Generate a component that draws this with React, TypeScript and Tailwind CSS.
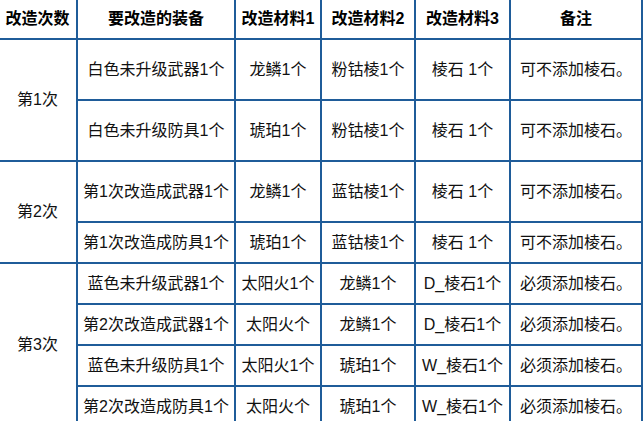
import React from "react";

type Row = {
  times?: string;
  span?: number;
  tall?: boolean;
  item: string;
  m1: string;
  m2: string;
  m3: string;
  note: string;
};

const rows: Row[] = [
  { times: "第1次", span: 2, tall: true, item: "白色未升级武器1个", m1: "龙鳞1个", m2: "粉钴棱1个", m3: "棱石 1个", note: "可不添加棱石。" },
  { tall: true, item: "白色未升级防具1个", m1: "琥珀1个", m2: "粉钴棱1个", m3: "棱石 1个", note: "可不添加棱石。" },
  { times: "第2次", span: 2, tall: true, item: "第1次改造成武器1个", m1: "龙鳞1个", m2: "蓝钴棱1个", m3: "棱石 1个", note: "可不添加棱石。" },
  { item: "第1次改造成防具1个", m1: "琥珀1个", m2: "蓝钴棱1个", m3: "棱石 1个", note: "可不添加棱石。" },
  { times: "第3次", span: 4, item: "蓝色未升级武器1个", m1: "太阳火1个", m2: "龙鳞1个", m3: "D_棱石1个", note: "必须添加棱石。" },
  { item: "第2次改造成武器1个", m1: "太阳火个", m2: "龙鳞1个", m3: "D_棱石1个", note: "必须添加棱石。" },
  { item: "蓝色未升级防具1个", m1: "太阳火1个", m2: "琥珀1个", m3: "W_棱石1个", note: "必须添加棱石。" },
  { item: "第2次改造成防具1个", m1: "太阳火个", m2: "琥珀1个", m3: "W_棱石1个", note: "必须添加棱石。" },
];

const headers = ["改造次数", "要改造的装备", "改造材料1", "改造材料2", "改造材料3", "备注"];
const widths = ["w-[79px]", "w-[158px]", "w-[86px]", "w-[94px]", "w-[95px]", "w-[132px]"];

const cell = "border-2 border-[#1f5c99] text-center align-middle p-0 whitespace-nowrap";

export default function App() {
  return (
    <div className="w-[643px] h-[421px] overflow-hidden bg-white">
      <table
        className="-ml-[3px] -mt-[2px] border-collapse table-fixed text-[16px] leading-[20px] text-[#111] font-['Liberation_Sans','Noto_Sans_CJK_SC',sans-serif]"
      >
        <colgroup>
          {widths.map((w, i) => (
            <col key={i} className={w} />
          ))}
        </colgroup>
        <thead>
          <tr className="h-[40px]">
            {headers.map((h) => (
              <th key={h} className={`${cell} font-bold text-black`}>
                {h}
              </th>
            ))}
          </tr>
        </thead>
        <tbody>
          {rows.map((r, i) => (
            <tr key={i} className={r.tall ? "h-[61px]" : "h-[41px]"}>
              {r.times && (
                <td rowSpan={r.span} className={cell}>
                  {r.times}
                </td>
              )}
              <td className={cell}>{r.item}</td>
              <td className={cell}>{r.m1}</td>
              <td className={cell}>{r.m2}</td>
              <td className={cell}>{r.m3}</td>
              <td className={cell}>{r.note}</td>
            </tr>
          ))}
        </tbody>
      </table>
    </div>
  );
}
